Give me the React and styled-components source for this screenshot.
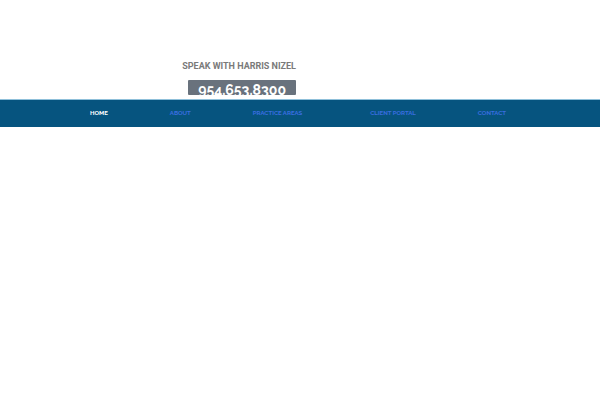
import styled, { createGlobalStyle } from "styled-components";

const GlobalStyle = createGlobalStyle`
  body {
    margin: 0;
    background: #fff;
    font-family: Raleway, Lato, sans-serif;
  }
`;

const Header = styled.header`
  display: grid;
  grid-template-columns: 1fr 1fr;
  padding: 60px 0 4px;
`;

const CallBox = styled.div`
  display: flex;
  flex-direction: column;
  align-items: flex-end;
  gap: 8px;
  padding-right: 4px;
`;

const CallTitle = styled.h2`
  margin: 0;
  color: #7a7a7a;
  font-family: Roboto, sans-serif;
  font-size: 9px;
  line-height: 12px;
  font-weight: 700;
`;

// fixed height, the bottom of the digits is cut off
const PhoneLink = styled.a`
  height: 15px;
  padding: 0 10px;
  overflow: hidden;
  border-radius: 1px;
  background: #69727d;
  color: #fff;
  font-size: 14px;
  line-height: 20px;
  font-weight: 700;
  text-decoration: none;
`;

const Nav = styled.nav`
  border-top: 1px solid #8fc0da;
  background: #06547f;
`;

const NavList = styled.ul`
  display: flex;
  justify-content: space-between;
  margin: 0;
  padding: 7px 94px 9px 90px;
  list-style: none;
`;

const NavLink = styled.a`
  display: block;
  padding-right: ${(props) => (props.$hasMenu ? "6px" : "0")};
  color: ${(props) => (props.$active ? "#fff" : "#3a6ee0")};
  font-size: 6px;
  line-height: 11px;
  font-weight: 700;
  text-decoration: none;
`;

const links = [
  { label: "HOME", active: true },
  { label: "ABOUT" },
  { label: "PRACTICE AREAS", hasMenu: true },
  { label: "CLIENT PORTAL" },
  { label: "CONTACT" },
];

export default function App() {
  return (
    <>
      <GlobalStyle />
      <Header>
        <CallBox>
          <CallTitle>SPEAK WITH HARRIS NIZEL</CallTitle>
          <PhoneLink href="tel:9546538300">954.653.8300</PhoneLink>
        </CallBox>
      </Header>
      <Nav>
        <NavList>
          {links.map(({ label, active, hasMenu }) => (
            <li key={label}>
              <NavLink href="#" $active={active} $hasMenu={hasMenu}>{label}</NavLink>
            </li>
          ))}
        </NavList>
      </Nav>
    </>
  );
}
